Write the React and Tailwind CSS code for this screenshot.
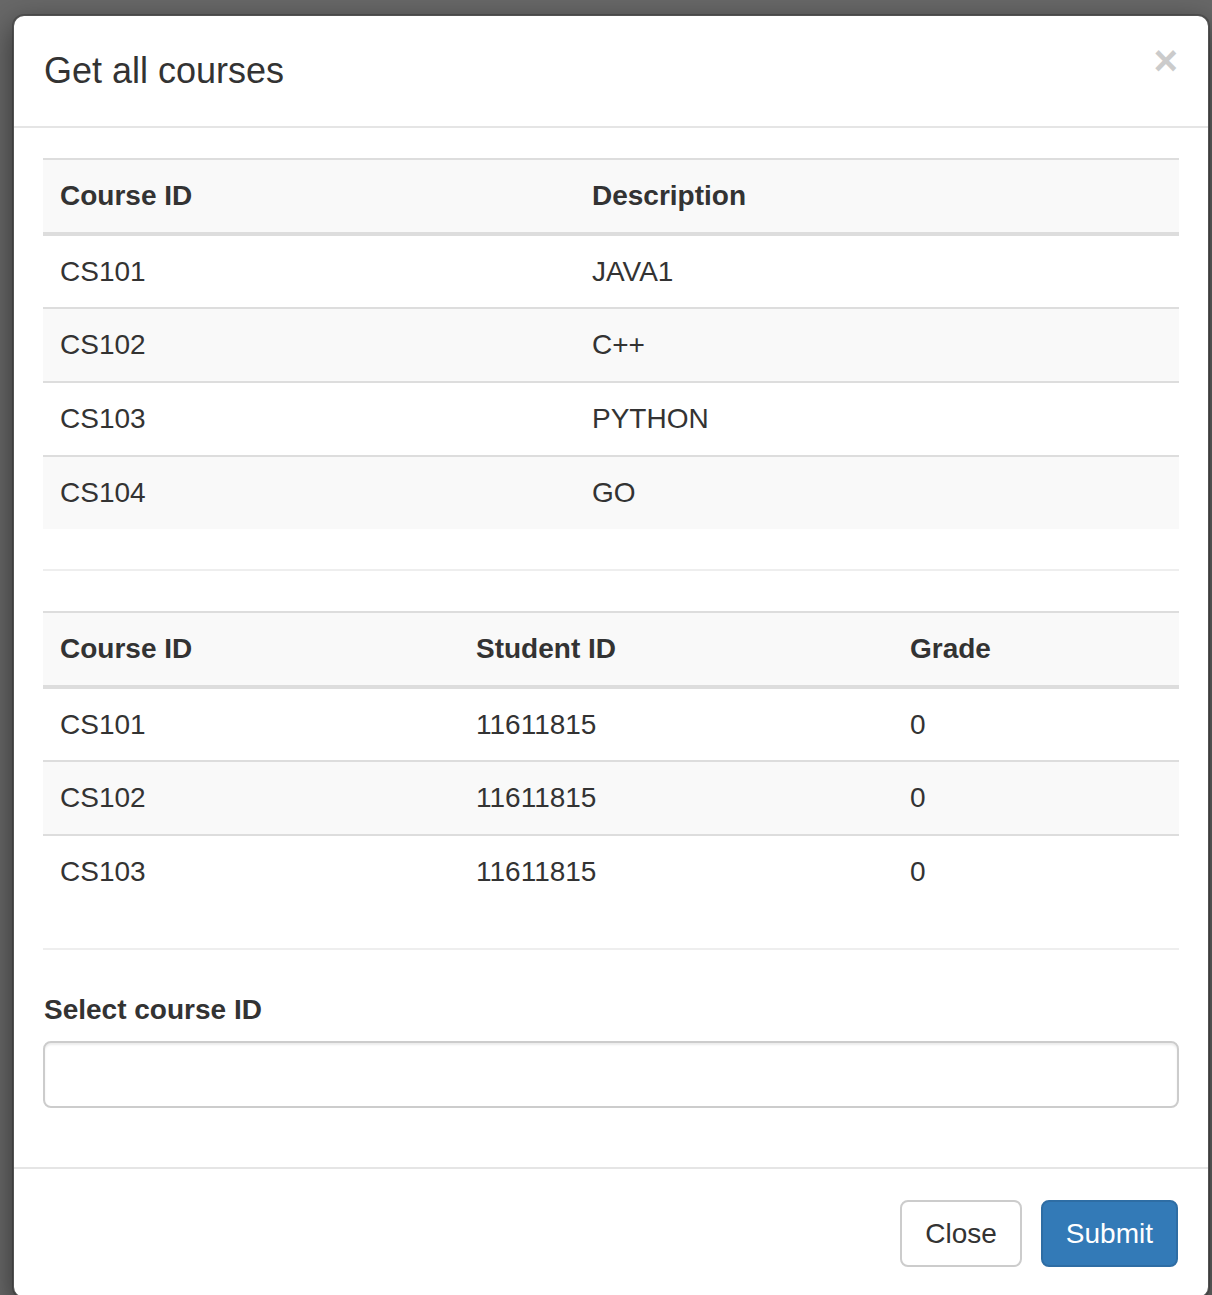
const courses = [
  { id: 'CS101', desc: 'JAVA1' },
  { id: 'CS102', desc: 'C++' },
  { id: 'CS103', desc: 'PYTHON' },
  { id: 'CS104', desc: 'GO' },
];

const grades = [
  { course: 'CS101', student: '11611815', grade: '0' },
  { course: 'CS102', student: '11611815', grade: '0' },
  { course: 'CS103', student: '11611815', grade: '0' },
];

const App = () => {
  return (
    <div
      className="min-h-screen bg-[#686868] pt-[14px] pl-[12px] overflow-hidden text-[#333]"
      style={{ fontFamily: '"Liberation Sans", Arial, sans-serif' }}
    >
      <div className="w-[1198px] bg-white rounded-[12px] border-2 border-black/20 shadow-[0_10px_30px_rgba(0,0,0,0.5)] bg-clip-padding">
        {/* Header */}
        <div className="flex justify-between items-start pl-[30px] pr-[30px] py-[29px] h-[112px] border-b-2 border-[#e5e5e5]">
          <h4 className="text-[36px] leading-[51px]">Get all courses</h4>
          <button className="text-[42px] font-bold leading-none text-black opacity-20 -mt-[5px]">×</button>
        </div>

        {/* Body */}
        <div className="px-[29px] pt-[30px] pb-[59px] text-[28px]">
          {/* Courses table */}
          <div className="border-t-2 border-[#ddd]">
            <div className="grid grid-cols-[533px_1fr] h-[72px] items-center bg-[#f9f9f9] font-bold border-b-4 border-[#ddd] box-content">
              <div className="pl-[17px]">Course ID</div>
              <div className="pl-[16px]">Description</div>
            </div>
            {courses.map((c, i) => (
              <div
                key={c.id}
                className={`grid grid-cols-[533px_1fr] items-center ${i > 0 ? 'h-[74px] border-t-2 border-[#ddd]' : 'h-[71px]'} ${i % 2 === 1 ? 'bg-[#f9f9f9]' : 'bg-white'}`}
              >
                <div className="pl-[17px]">{c.id}</div>
                <div className="pl-[16px]">{c.desc}</div>
              </div>
            ))}
          </div>

          <hr className="my-[40px] border-t-2 border-[#eee]" />

          {/* Grades table */}
          <div className="border-t-2 border-[#ddd]">
            <div className="grid grid-cols-[417px_434px_1fr] h-[72px] items-center bg-[#f9f9f9] font-bold border-b-4 border-[#ddd] box-content">
              <div className="pl-[17px]">Course ID</div>
              <div className="pl-[16px]">Student ID</div>
              <div className="pl-[16px]">Grade</div>
            </div>
            {grades.map((g, i) => (
              <div
                key={g.course}
                className={`grid grid-cols-[417px_434px_1fr] items-center ${i > 0 ? 'h-[74px] border-t-2 border-[#ddd]' : 'h-[71px]'} ${i % 2 === 1 ? 'bg-[#f9f9f9]' : 'bg-white'}`}
              >
                <div className="pl-[17px]">{g.course}</div>
                <div className="pl-[16px]">{g.student}</div>
                <div className="pl-[16px]">{g.grade}</div>
              </div>
            ))}
          </div>

          <hr className="my-[40px] border-t-2 border-[#eee]" />

          {/* Form */}
          <div>
            <label className="block font-bold leading-[40px] mb-[11px] pl-[1px]">Select course ID</label>
            <input
              type="text"
              className="block w-full h-[67px] border-2 border-[#ccc] rounded-[8px] px-[24px] shadow-[inset_0_2px_2px_rgba(0,0,0,0.075)] outline-none"
            />
          </div>
        </div>

        {/* Footer */}
        <div className="flex justify-end gap-[19px] px-[30px] pt-[31px] pb-[30px] border-t-2 border-[#e5e5e5] text-[28px]">
          <button className="h-[67px] px-[23px] border-2 border-[#ccc] rounded-[8px] bg-white text-[#333]">Close</button>
          <button className="h-[67px] px-[23px] border-2 border-[#2e6da4] rounded-[8px] bg-[#337ab7] text-white">Submit</button>
        </div>
      </div>
    </div>
  );
};

export default App;
